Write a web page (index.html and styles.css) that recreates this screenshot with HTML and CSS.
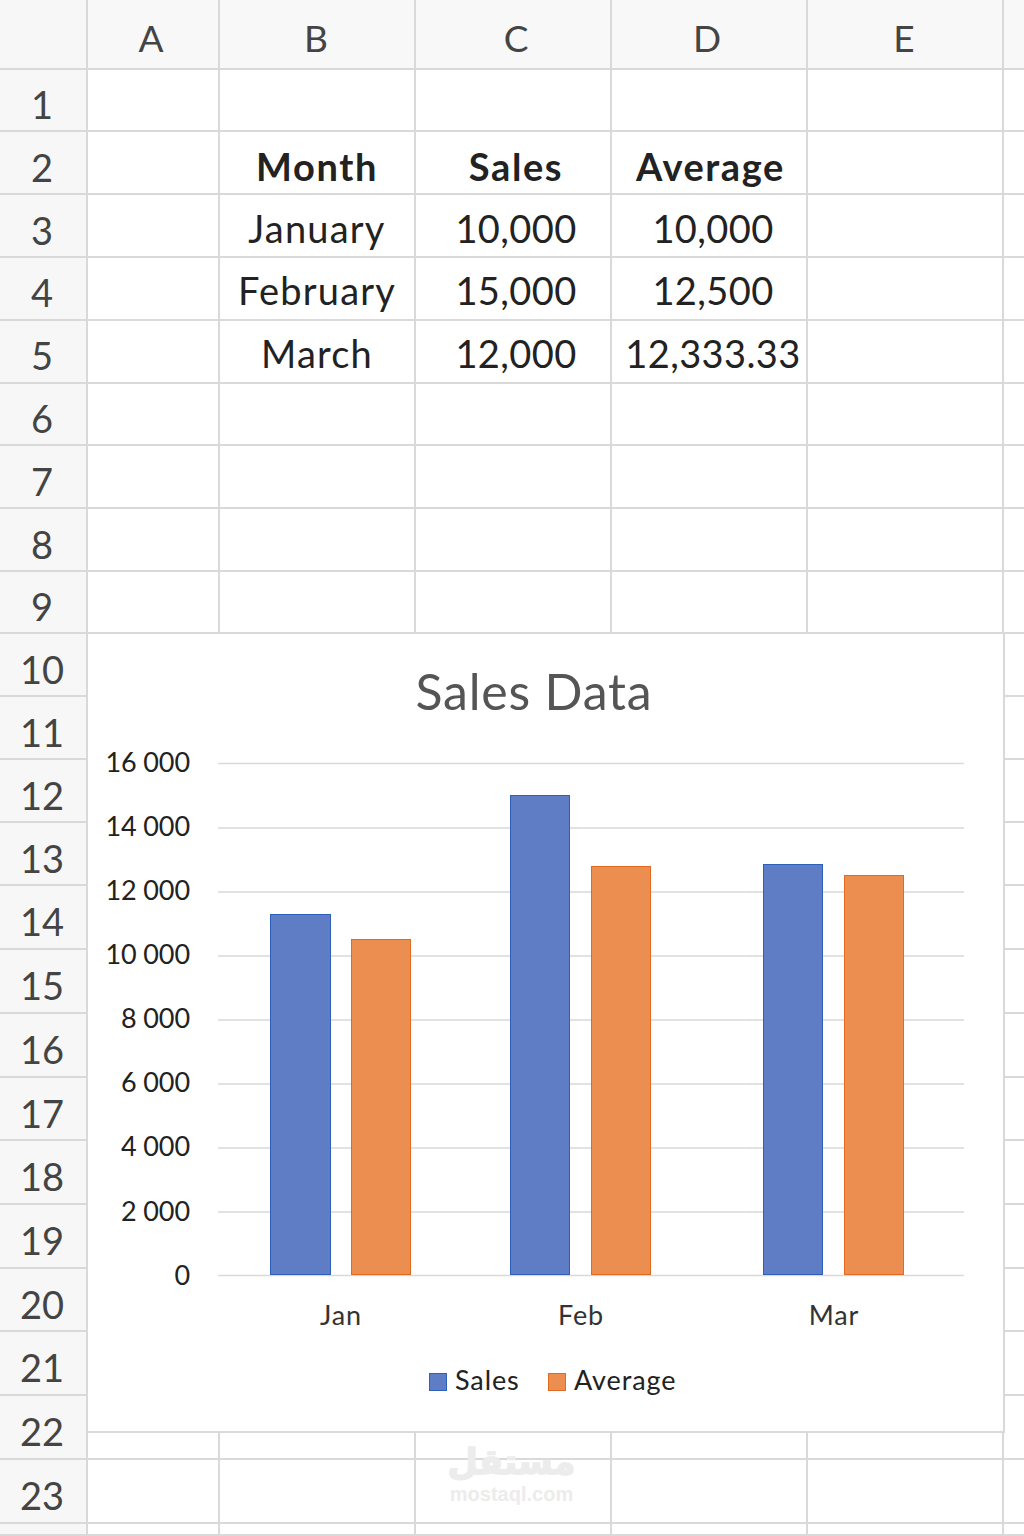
FILE: index.html
```html
<!DOCTYPE html>
<html lang="en">
<head>
    <meta charset="UTF-8">
    <title>Sales Data</title>
    <link rel="stylesheet" href="styles.css">
</head>
<body>
    <div class="sheet">
        <div class="row head"><div></div><div class="col-a">A</div><div class="col-b">B</div><div class="col-c">C</div><div class="col-d">D</div><div class="col-e">E</div><div></div></div>
        <div class="row"><div>1</div><div></div><div></div><div></div><div></div><div></div><div></div></div>
        <div class="row titles"><div>2</div><div></div><div class="word">Month</div><div class="word col-c">Sales</div><div class="word col-t">Average</div><div></div><div></div></div>
        <div class="row"><div>3</div><div></div><div class="word">January</div><div class="col-c num">10,000</div><div class="col-n num">10,000</div><div></div><div></div></div>
        <div class="row raised"><div>4</div><div></div><div class="word">February</div><div class="col-c num">15,000</div><div class="col-n num">12,500</div><div></div><div></div></div>
        <div class="row raised"><div>5</div><div></div><div class="word">March</div><div class="col-c num">12,000</div><div class="col-n num">12,333.33</div><div></div><div></div></div>
        <div class="row"><div>6</div><div></div><div></div><div></div><div></div><div></div><div></div></div>
        <div class="row"><div>7</div><div></div><div></div><div></div><div></div><div></div><div></div></div>
        <div class="row"><div>8</div><div></div><div></div><div></div><div></div><div></div><div></div></div>
        <div class="row"><div>9</div><div></div><div></div><div></div><div></div><div></div><div></div></div>
        <div class="row"><div>10</div><div></div><div></div><div></div><div></div><div></div><div></div></div>
        <div class="row"><div>11</div><div></div><div></div><div></div><div></div><div></div><div></div></div>
        <div class="row"><div>12</div><div></div><div></div><div></div><div></div><div></div><div></div></div>
        <div class="row"><div>13</div><div></div><div></div><div></div><div></div><div></div><div></div></div>
        <div class="row"><div>14</div><div></div><div></div><div></div><div></div><div></div><div></div></div>
        <div class="row"><div>15</div><div></div><div></div><div></div><div></div><div></div><div></div></div>
        <div class="row"><div>16</div><div></div><div></div><div></div><div></div><div></div><div></div></div>
        <div class="row"><div>17</div><div></div><div></div><div></div><div></div><div></div><div></div></div>
        <div class="row"><div>18</div><div></div><div></div><div></div><div></div><div></div><div></div></div>
        <div class="row"><div>19</div><div></div><div></div><div></div><div></div><div></div><div></div></div>
        <div class="row"><div>20</div><div></div><div></div><div></div><div></div><div></div><div></div></div>
        <div class="row"><div>21</div><div></div><div></div><div></div><div></div><div></div><div></div></div>
        <div class="row"><div>22</div><div></div><div></div><div></div><div></div><div></div><div></div></div>
        <div class="row"><div>23</div><div></div><div></div><div></div><div></div><div></div><div></div></div>
        <div class="row"><div></div><div></div><div></div><div></div><div></div><div></div><div></div></div>

        <div class="chart">
            <svg viewBox="88 634 915 797" width="915" height="797">
                <text class="chart-title" x="534" y="710">Sales Data</text>

                <g class="grid-lines">
                    <line x1="218" x2="964" y1="763.5" y2="763.5"/>
                    <line x1="218" x2="964" y1="828" y2="828"/>
                    <line x1="218" x2="964" y1="892" y2="892"/>
                    <line x1="218" x2="964" y1="956" y2="956"/>
                    <line x1="218" x2="964" y1="1020" y2="1020"/>
                    <line x1="218" x2="964" y1="1084" y2="1084"/>
                    <line x1="218" x2="964" y1="1148" y2="1148"/>
                    <line x1="218" x2="964" y1="1212" y2="1212"/>
                    <line x1="218" x2="964" y1="1275.5" y2="1275.5"/>
                </g>

                <g class="y-labels">
                    <text x="190" y="772">16 000</text>
                    <text x="190" y="836">14 000</text>
                    <text x="190" y="900">12 000</text>
                    <text x="190" y="964">10 000</text>
                    <text x="190" y="1028">8 000</text>
                    <text x="190" y="1092">6 000</text>
                    <text x="190" y="1156">4 000</text>
                    <text x="190" y="1221">2 000</text>
                    <text x="190" y="1285">0</text>
                </g>

                <g class="bars-sales">
                    <rect x="270.5" y="914.5" width="60" height="360"/>
                    <rect x="510.5" y="795.5" width="59" height="479"/>
                    <rect x="763.5" y="864.5" width="59" height="410"/>
                </g>
                <g class="bars-average">
                    <rect x="351.5" y="939.5" width="59" height="335"/>
                    <rect x="591.5" y="866.5" width="59" height="408"/>
                    <rect x="844.5" y="875.5" width="59" height="399"/>
                </g>

                <g class="x-labels">
                    <text x="341" y="1325">Jan</text>
                    <text x="581" y="1325">Feb</text>
                    <text x="834" y="1325">Mar</text>
                </g>

                <g class="legend">
                    <rect class="swatch-sales" x="429.5" y="1373.5" width="17" height="17"/>
                    <text x="455" y="1390">Sales</text>
                    <rect class="swatch-average" x="548.5" y="1373.5" width="17" height="17"/>
                    <text x="574" y="1390">Average</text>
                </g>
            </svg>
        </div>

        <div class="watermark">
            <div class="watermark-ar" lang="ar" dir="rtl">مستقل</div>
            <div class="watermark-en">mostaql.com</div>
        </div>
    </div>
</body>
</html>
```

FILE: styles.css
```css
body {
    margin: 0;
    background: #fff;
    font-family: 'Lato', 'Liberation Sans', sans-serif;
    color: #222;
    overflow: hidden;
}

.sheet {
    position: relative;
    width: 1024px;
    height: 1536px;
    overflow: hidden;
    display: grid;
    grid-template-rows: 70px 62px 63px 63px 63px 63px 62px 63px 63px 62px 63px 63px 63px 63px 64px 64px 64px 63px 64px 64px 63px 64px 64px 64px 12px;
}

.row {
    display: grid;
    grid-template-columns: 88px 132px 196px 196px 196px 196px 20px;
}

.row > div {
    box-sizing: border-box;
    display: flex;
    align-items: center;
    justify-content: center;
    padding-top: 4px;
    border-right: 2px solid #d9d9d9;
    border-bottom: 2px solid #d9d9d9;
    font-size: 38px;
    line-height: 1;
}

.row > div:first-child {
    background: #f7f7f7;
    color: #444;
    padding-right: 2px;
    padding-top: 8px;
}

.row > div:last-child {
    border-right: none;
}

.raised > div {
    padding-top: 2px;
}

.row.raised > div:first-child {
    padding-top: 6px;
}

.head > div {
    background: #f8f8f8;
    color: #444;
    font-size: 37px;
}

.head > div:nth-child(n) {
    padding-top: 6px;
}

.col-a {
    padding-right: 4px;
}

.col-b {
    padding-right: 2px;
}

.col-c {
    padding-left: 6px;
}

.col-d {
    padding-right: 4px;
}

.col-e {
    padding-right: 2px;
}

.col-n {
    padding-left: 8px;
}

.col-t {
    padding-left: 3px;
}

.word {
    letter-spacing: 1.2px;
}

.num {
    letter-spacing: 0.4px;
}

.titles > div:not(:first-child) {
    font-weight: 700;
    padding-top: 6px;
    letter-spacing: 1.6px;
}

.chart {
    position: absolute;
    left: 86px;
    top: 632px;
    width: 915px;
    height: 797px;
    background: #fff;
    border: 2px solid #d9d9d9;
}

.chart svg {
    display: block;
}

.chart text {
    font-family: 'Lato', 'Liberation Sans', sans-serif;
    font-size: 27px;
    fill: #222;
}

.chart .chart-title {
    font-size: 50px;
    letter-spacing: 0.8px;
    fill: #555;
    text-anchor: middle;
}

.grid-lines line {
    stroke: #d9d9d9;
    stroke-width: 1.5;
}

.y-labels text {
    text-anchor: end;
    letter-spacing: -0.1px;
}

.x-labels text {
    text-anchor: middle;
    letter-spacing: 0.8px;
    fill: #333;
}

.legend text {
    letter-spacing: 0.9px;
}

.bars-sales rect,
.swatch-sales {
    fill: #5e7dc5;
    stroke: #2f5fbd;
}

.bars-average rect,
.swatch-average {
    fill: #ec8e50;
    stroke: #e2691f;
}

.watermark {
    position: absolute;
    left: 431px;
    top: 1440px;
    width: 161px;
    color: #ececec;
    text-align: center;
}

.watermark-ar {
    font-family: 'DejaVu Sans', sans-serif;
    font-weight: 700;
    font-size: 35px;
    line-height: 45px;
    -webkit-text-stroke: 1.5px #ececec;
}

.watermark-en {
    font-family: 'Liberation Sans', sans-serif;
    font-weight: 700;
    font-size: 20px;
    line-height: 19px;
}
```
